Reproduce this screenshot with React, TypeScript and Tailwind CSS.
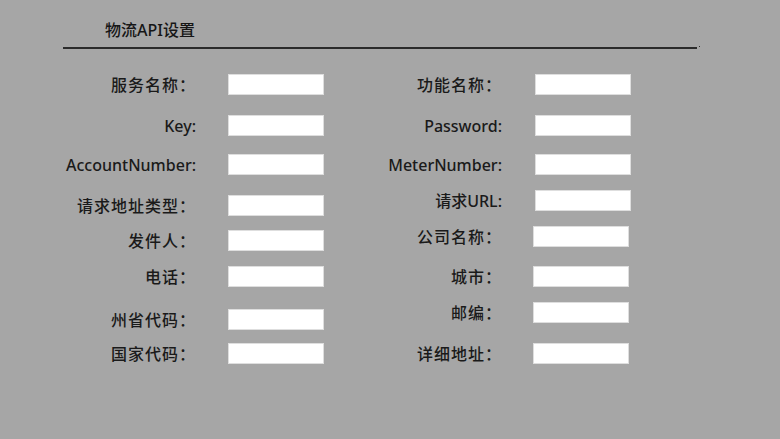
type Field = { label: string; mt: string; ml: string };

const left: Field[] = [
  { label: "服务名称：", mt: "mt-0", ml: "ml-[32px]" },
  { label: "Key:", mt: "mt-[20px]", ml: "ml-[32px]" },
  { label: "AccountNumber:", mt: "mt-[18px]", ml: "ml-[32px]" },
  { label: "请求地址类型：", mt: "mt-[20px]", ml: "ml-[32px]" },
  { label: "发件人：", mt: "mt-[14px]", ml: "ml-[32px]" },
  { label: "电话：", mt: "mt-[15px]", ml: "ml-[32px]" },
  { label: "州省代码：", mt: "mt-[22px]", ml: "ml-[32px]" },
  { label: "国家代码：", mt: "mt-[13px]", ml: "ml-[32px]" },
];

const right: Field[] = [
  { label: "功能名称：", mt: "mt-0", ml: "ml-[33px]" },
  { label: "Password:", mt: "mt-[20px]", ml: "ml-[33px]" },
  { label: "MeterNumber:", mt: "mt-[18px]", ml: "ml-[33px]" },
  { label: "请求URL:", mt: "mt-[15px]", ml: "ml-[33px]" },
  { label: "公司名称：", mt: "mt-[15px]", ml: "ml-[31px]" },
  { label: "城市：", mt: "mt-[19px]", ml: "ml-[31px]" },
  { label: "邮编：", mt: "mt-[15px]", ml: "ml-[31px]" },
  { label: "详细地址：", mt: "mt-[20px]", ml: "ml-[31px]" },
];

function Row({ f, labelW }: { f: Field; labelW: string }) {
  const cjk = f.label.endsWith("：");
  return (
    <div className={`flex items-center h-[21px] ${f.mt}`}>
      <label
        className={`${labelW} text-right text-[16px] font-medium text-[#1a1a1a] whitespace-nowrap ${
          cjk ? "tracking-[1px]" : ""
        }`}
      >
        {f.label}
      </label>
      <input
        type="text"
        className={`${f.ml} w-[96px] h-[21px] bg-white border border-[#dedede] outline-none`}
      />
    </div>
  );
}

export default function App() {
  return (
    <div
      className="w-[780px] h-[439px] bg-[#a6a6a6] overflow-hidden"
      style={{ fontFamily: '"Noto Sans", "Noto Sans CJK SC", sans-serif' }}
    >
      <div className="pl-[105px] pt-[18px] h-[47px] text-[16px] font-medium text-[#161616]">物流API设置</div>
      <div className="relative ml-[63px] w-[634px] h-[2px] bg-[#2b2b2b]">
        <span className="absolute left-[636px] -top-[1px] w-[1px] h-[1px] bg-[#333]" />
      </div>
      <div className="flex mt-[25px]">
        <div className="ml-[60px] flex flex-col">
          {left.map((f) => (
            <Row key={f.label} f={f} labelW="w-[136px]" />
          ))}
        </div>
        <div className="ml-[56px] flex flex-col">
          {right.map((f) => (
            <Row key={f.label} f={f} labelW="w-[122px]" />
          ))}
        </div>
      </div>
    </div>
  );
}
